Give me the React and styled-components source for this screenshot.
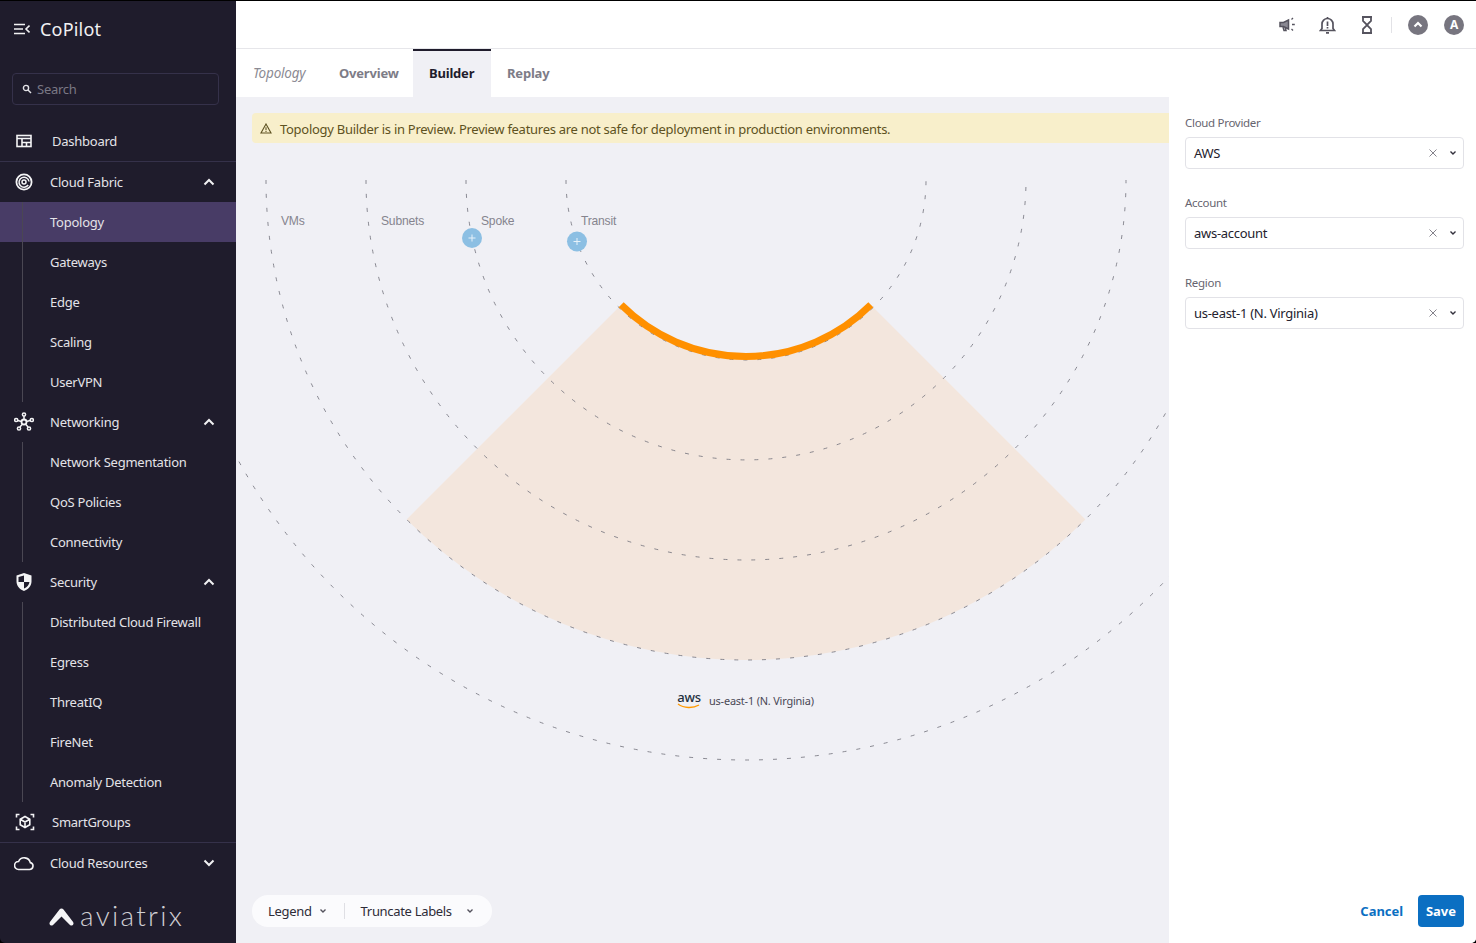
import React from 'react';
import styled, { createGlobalStyle } from 'styled-components';

const FONT = '"Noto Sans", "Open Sans", sans-serif';

const GlobalStyle = createGlobalStyle`
  html, body {
    margin: 0;
    padding: 0;
    height: 100%;
    background: #000;
    overflow: hidden;
  }
  * {
    box-sizing: border-box;
  }
  #root {
    height: 100%;
  }
`;

const Frame = styled.div`
  display: flex;
  width: 1476px;
  height: 942px;
  margin-top: 1px;
  overflow: hidden;
  border-radius: 0 0 5px 5px;
  font-family: ${FONT};
  font-size: 13px;
  letter-spacing: -0.2px;
`;

/* sidebar */
const Sidebar = styled.aside`
  display: flex;
  flex-direction: column;
  flex: 0 0 236px;
  background: #1f1c2c;
  color: #e4e3e8;
  letter-spacing: -0.25px;
`;

const Brand = styled.div`
  display: flex;
  align-items: center;
  gap: 10px;
  height: 56px;
  padding: 0 0 0 14px;
  font-size: 18px;
  letter-spacing: 0.2px;
  color: #f1f1f3;
`;

const SearchBox = styled.div`
  display: flex;
  align-items: center;
  gap: 4px;
  height: 32px;
  margin: 16px 17px 16px 12px;
  padding: 0 9px;
  border: 1px solid #35314a;
  border-radius: 4px;
  color: #7a7885;
  svg {
    color: #e4e3e8;
  }
`;

const NavRow = styled.div`
  display: flex;
  align-items: center;
  height: 40px;
  padding-left: ${(p) => (p.$wide ? '52px' : '50px')};
  padding-right: 21px;
  position: relative;
  ${(p) => p.$divider && 'border-bottom: 1px solid #35314a; height: 41px;'}
`;

const NavIcon = styled.span`
  position: absolute;
  left: ${(p) => p.$left || 14}px;
  top: 50%;
  transform: translateY(-50%);
  display: flex;
  color: #f4f4f6;
`;

const Caret = styled.svg`
  margin-left: auto;
  width: 12px;
  height: 8px;
  color: #f1f1f3;
`;

const SubList = styled.div`
  position: relative;
  &::before {
    content: '';
    position: absolute;
    left: 22px;
    top: 0;
    bottom: 0;
    width: 1px;
    background: #4a4753;
    z-index: 1;
  }
`;

const SubItem = styled.div`
  display: flex;
  align-items: center;
  height: 40px;
  padding-left: 50px;
  background: ${(p) => (p.$active ? '#483c66' : 'transparent')};
`;

const LogoRow = styled.div`
  display: flex;
  align-items: center;
  gap: 5px;
  margin-top: 14px;
  padding-left: 48px;
  height: 40px;
`;

const LogoWord = styled.span`
  font-family: "Lato", sans-serif;
  font-weight: 300;
  font-size: 28px;
  letter-spacing: 2.3px;
  color: #cfced3;
  line-height: 1;
  margin-top: -4px;
`;

/* right side */
const Content = styled.div`
  display: flex;
  flex-direction: column;
  flex: 1;
  min-width: 0;
  background: #fff;
`;

const TopBar = styled.header`
  display: flex;
  align-items: center;
  justify-content: flex-end;
  flex: 0 0 48px;
  padding-right: 12px;
  border-bottom: 1px solid #e6e6ea;
  color: #55535e;
`;

const TopIcon = styled.span`
  display: flex;
  justify-content: center;
  width: 40px;
`;

const TopDivider = styled.span`
  width: 1px;
  height: 16px;
  margin: 0 16px 0 4px;
  background: #e2e2e6;
`;

const Avatar = styled.span`
  display: flex;
  align-items: center;
  justify-content: center;
  width: 20px;
  height: 20px;
  margin-left: ${(p) => p.$gap || 0}px;
  border-radius: 50%;
  background: #77757f;
  color: #fff;
  font-size: 12px;
  font-weight: 700;
`;

const Tabs = styled.nav`
  display: flex;
  flex: 0 0 48px;
  padding-left: 1px;
`;

const Tab = styled.div`
  display: flex;
  align-items: center;
  flex: 0 0 ${(p) => (p.$width ? `${p.$width}px` : 'auto')};
  min-width: 0;
  padding: 0 0 2px 16px;
  white-space: nowrap;
  font-size: 13px;
  font-weight: ${(p) => (p.$plain ? 400 : 700)};
  font-style: ${(p) => (p.$plain ? 'italic' : 'normal')};
  color: ${(p) => (p.$active ? '#1f1c2c' : '#7d7c87')};
  background: ${(p) => (p.$active ? '#f0f0f5' : 'transparent')};
  border-top: 2px solid ${(p) => (p.$active ? '#1f1c2c' : 'transparent')};
  ${(p) => p.$plain && 'color: #8b8a93; font-size: 13.5px;'}
`;

const Body = styled.div`
  display: flex;
  flex: 1;
  min-height: 0;
`;

const Stage = styled.main`
  position: relative;
  display: flex;
  flex-direction: column;
  flex: 0 0 933px;
  padding: 16px 0 16px 16px;
  background: #f0f0f5;
  overflow: hidden;
`;

const Canvas = styled.svg`
  position: absolute;
  left: 0;
  top: 0;
`;

const Banner = styled.div`
  position: relative;
  display: flex;
  align-items: center;
  gap: 8px;
  height: 30px;
  padding: 1px 0 0 8px;
  border-radius: 4px 0 0 4px;
  background: #f8efcb;
  color: #5e5222;
  letter-spacing: -0.28px;
`;

const RegionTag = styled.div`
  position: absolute;
  left: 441px;
  top: 595px;
  display: flex;
  align-items: center;
  gap: 8px;
  font-size: 10.95px;
  color: #4a4855;
`;

const AwsMark = styled.span`
  display: flex;
  flex-direction: column;
  align-items: center;
  width: 24px;
  font-size: 13px;
  font-weight: 500;
  line-height: 11px;
  letter-spacing: -0.3px;
  color: #232f3e;
`;

const ToolPill = styled.div`
  position: relative;
  display: flex;
  align-items: center;
  align-self: flex-start;
  height: 32px;
  margin-top: auto;
  padding: 0 18px 0 16px;
  border-radius: 16px;
  background: #fbfbfd;
  color: #2e2c38;
  letter-spacing: -0.32px;
`;

const ToolDivider = styled.span`
  width: 1px;
  height: 16px;
  margin: 0 16px 0 17px;
  background: #dfdfe4;
`;

const SmallChevron = styled.svg`
  width: 8px;
  height: 6px;
  margin-left: ${(p) => p.$gap || 0}px;
  color: ${(p) => p.$color || '#55535e'};
`;

const Panel = styled.section`
  display: flex;
  flex-direction: column;
  flex: 1;
  padding: 16px 12px 16px 16px;
  background: #fff;
`;

const Field = styled.div`
  display: flex;
  flex-direction: column;
  height: 80px;
`;

const FieldLabel = styled.label`
  height: 24px;
  padding-top: 1px;
  font-size: 11.5px;
  line-height: 17px;
  letter-spacing: -0.3px;
  color: #66646f;
`;

const Select = styled.div`
  display: flex;
  align-items: center;
  height: 32px;
  padding: 0 6px 0 8px;
  border: 1px solid #e2e2e7;
  border-radius: 4px;
  color: #24222e;
  letter-spacing: -0.28px;
`;

const ClearMark = styled.svg`
  width: 8px;
  height: 8px;
  margin-left: auto;
  margin-right: 12px;
  color: #77757f;
`;

const PanelActions = styled.div`
  display: flex;
  align-items: center;
  justify-content: flex-end;
  gap: 15px;
  margin-top: auto;
`;

const CancelLink = styled.span`
  font-weight: 700;
  letter-spacing: -0.05px;
  color: #0b6fc2;
`;

const SaveButton = styled.button`
  width: 46px;
  height: 32px;
  padding: 0;
  border: none;
  border-radius: 4px;
  background: #0b6fc2;
  color: #fff;
  font: inherit;
  font-weight: 700;
`;

const Up = () => (
  <Caret viewBox="0 0 12 8" fill="none" stroke="currentColor" strokeWidth="2">
    <path d="M1.5 6.5 6 2l4.5 4.5" />
  </Caret>
);

const Down = () => (
  <Caret viewBox="0 0 12 8" fill="none" stroke="currentColor" strokeWidth="2">
    <path d="M1.5 1.5 6 6l4.5-4.5" />
  </Caret>
);

const Chev = ({ gap, color }) => (
  <SmallChevron $gap={gap} $color={color} viewBox="0 0 8 6" fill="none" stroke="currentColor" strokeWidth="1.4">
    <path d="M1.5 1.5 4 4l2.5-2.5" />
  </SmallChevron>
);

const Icon = ({ size = 20, children, ...rest }) => (
  <svg width={size} height={size} viewBox="0 0 20 20" fill="none" stroke="currentColor" strokeWidth="1.6" {...rest}>
    {children}
  </svg>
);

const sections = [
  {
    label: 'Cloud Fabric',
    icon: (
      <Icon strokeWidth="1.8" size={20}>
        <circle cx="10" cy="10" r="7.6" />
        <path d="M14.200 13A5 5 0 1 1 15 9.500" strokeWidth="1.5" />
        <circle cx="10" cy="10" r="2" strokeWidth="1.500" />
      </Icon>
    ),
    items: ['Topology', 'Gateways', 'Edge', 'Scaling', 'UserVPN'],
  },
  {
    label: 'Networking',
    icon: (
      <Icon>
        <circle cx="10" cy="10" r="2.500" strokeWidth="1.800" />
        <g strokeWidth="1.500">
          <circle cx="10" cy="2.500" r="1.600" />
          <circle cx="2.200" cy="8" r="1.600" />
          <circle cx="17.800" cy="8" r="1.600" />
          <circle cx="5" cy="16.500" r="1.600" />
          <circle cx="15" cy="16.500" r="1.600" />
          <path d="M10 4v3.500M3.800 8.400l3.800 1M16.200 8.400l-3.800 1M5.900 15l2.700-3M14.100 15l-2.700-3" />
        </g>
      </Icon>
    ),
    items: ['Network Segmentation', 'QoS Policies', 'Connectivity'],
  },
  {
    label: 'Security',
    icon: (
      <Icon stroke="none">
        <path
          fill="currentColor"
          fillRule="evenodd"
          d="M10 1 2.500 3.500v6c0 4.300 3.200 7.800 7.500 9.500 4.300-1.700 7.500-5.200 7.500-9.500v-6L10 1ZM10 3.500V10H4.500V5L10 3.500Zm0 6.500h5.500c-.3 3-2.700 5.300-5.500 6.600V10Z"
        />
      </Icon>
    ),
    items: ['Distributed Cloud Firewall', 'Egress', 'ThreatIQ', 'FireNet', 'Anomaly Detection'],
  },
];

const radii = [180, 280, 380, 480, 580];
const CX = 746;
const CY = 180;

const arcPath = (r) => `M${CX - r} ${CY}A${r} ${r} 0 0 0 ${CX + r} ${CY}`;

const polar = (r, deg) => {
  const a = (deg * Math.PI) / 180;
  return [CX + r * Math.cos(a), CY + r * Math.sin(a)];
};

const wedge = () => {
  const [ax, ay] = polar(480, 135);
  const [bx, by] = polar(480, 45);
  const [cx, cy] = polar(176, 45);
  const [dx, dy] = polar(176, 135);
  return `M${ax} ${ay}A480 480 0 0 0 ${bx} ${by}L${cx} ${cy}A176 176 0 0 1 ${dx} ${dy}Z`;
};

const orangeArc = () => {
  const [cx, cy] = polar(176.5, 45);
  const [dx, dy] = polar(176.5, 135);
  return `M${dx} ${dy}A176.5 176.5 0 0 0 ${cx} ${cy}`;
};

const PlusNode = ({ x, y }) => (
  <g>
    <circle cx={x} cy={y} r="10" fill="#8cbfe3" />
    <path d={`M${x - 3.5} ${y}h7M${x} ${y - 3.5}v7`} stroke="#e6f1f9" strokeWidth="1" />
  </g>
);

const TopologyCanvas = () => (
  <Canvas width="933" height="846" viewBox="236 97 933 846" fontFamily="Liberation Sans, Arial, sans-serif">
    <path d={wedge()} fill="#f3e6dd" />
    {radii.map((r) => (
      <path key={r} d={arcPath(r)} fill="none" stroke="#6f6e78" strokeWidth="0.8" strokeDasharray="4 10" />
    ))}
    <path d={orangeArc()} fill="none" stroke="#ff9000" strokeWidth="7" />
    <g fontSize="12.1" fill="#85848e">
      <text x="281" y="225">VMs</text>
      <text x="381" y="225">Subnets</text>
      <text x="481" y="225">Spoke</text>
      <text x="581" y="225">Transit</text>
    </g>
    <PlusNode x={472} y={238} />
    <PlusNode x={577} y={241.5} />
  </Canvas>
);

const fields = [
  ['Cloud Provider', 'AWS'],
  ['Account', 'aws-account'],
  ['Region', 'us-east-1 (N. Virginia)'],
];

export default function App() {
  return (
    <Frame>
      <GlobalStyle />
      <Sidebar>
        <Brand>
          <svg width="16" height="12" viewBox="0 0 16 12" fill="none" stroke="currentColor" strokeWidth="1.6">
            <path d="M0 1.500h11M0 6h9M0 10.500h11M15.500 2.500 12 6l3.500 3.500" />
          </svg>
          CoPilot
        </Brand>
        <SearchBox>
          <svg width="11" height="11" viewBox="0 0 11 11" fill="none" stroke="currentColor" strokeWidth="1.4">
            <circle cx="4" cy="4" r="2.600" />
            <path d="m6 6 3 3" />
          </svg>
          Search
        </SearchBox>
        <NavRow $wide $divider>
          <NavIcon $left={16}>
            <Icon size={16} viewBox="0 0 16 16" strokeWidth="1.600">
              <rect x="1" y="2.500" width="14" height="11" />
              <path d="M1 5.500h14M6 5.500v8M6 9.500h9M10.500 9.500v4" />
            </Icon>
          </NavIcon>
          Dashboard
        </NavRow>
        {sections.map((s) => (
          <React.Fragment key={s.label}>
            <NavRow>
              <NavIcon>{s.icon}</NavIcon>
              {s.label}
              <Up />
            </NavRow>
            <SubList>
              {s.items.map((item) => (
                <SubItem key={item} $active={item === 'Topology'}>
                  {item}
                </SubItem>
              ))}
            </SubList>
          </React.Fragment>
        ))}
        <NavRow $wide $divider>
          <NavIcon $left={15}>
            <Icon>
              <path d="M1.500 5.500V2.500H4.500M15.500 2.500h3v3M1.500 14.500v3h3M15.500 17.500h3v-3" strokeWidth="1.600" />
              <path d="M10 4.500l4.800 2.700v5.600L10 15.500l-4.800-2.700V7.200L10 4.500ZM5.200 7.200 10 10l4.800-2.800M10 10v5.500" strokeWidth="1.600" />
            </Icon>
          </NavIcon>
          SmartGroups
        </NavRow>
        <NavRow>
          <NavIcon>
            <Icon>
              <path d="M4.500 16.500h11a3.500 3.500 0 0 0 .8-6.900A6.200 6.200 0 0 0 4.600 8.500a4 4 0 0 0-.1 8Z" strokeWidth="1.600" />
            </Icon>
          </NavIcon>
          Cloud Resources
          <Down />
        </NavRow>
        <LogoRow>
          <svg width="27" height="20" viewBox="0 0 26 20">
            <path
              fill="#f4f4f6"
              d="M13 1.500c.8 0 1.500.4 2 1.100l9.600 12.500c1.200 1.600-.1 3.900-2.100 3.400-.5-.1-1-.4-1.300-.8L13 9.500 4.800 17.700c-.3.400-.8.700-1.300.8-2 .5-3.300-1.800-2.100-3.400L11 2.600c.5-.7 1.200-1.100 2-1.100Z"
            />
          </svg>
          <LogoWord>aviatrix</LogoWord>
        </LogoRow>
      </Sidebar>

      <Content>
        <TopBar>
          <TopIcon>
            <svg width="20" height="16" viewBox="-1 0 20 16" fill="none" stroke="currentColor" strokeWidth="1.500">
              <path d="M2 5.500h3.500l5-2.500v9l-5-2.500H2v-4Z" fill="#8a8993" />
              <path d="M5 10l1 3.500h2l-.8-3" />
              <path d="M13.500 2.500l1.500-1.500M14 7.500h2.800M13.500 12l1.500 1.500" strokeWidth="1.300" />
            </svg>
          </TopIcon>
          <TopIcon>
            <svg width="17" height="18" viewBox="0 0 17 18" fill="none" stroke="currentColor" strokeWidth="1.700">
              <path d="M1.500 14.500h14l-1.500-2V8a5.500 5.500 0 0 0-11 0v4.500l-1.500 2Z" />
              <path d="M8.500 5.500v4.500M8.500 11v1.500M7 16.800h3M8.500 2.500V1" />
            </svg>
          </TopIcon>
          <TopIcon>
            <svg width="12" height="18" viewBox="0 0 12 18" fill="none" stroke="currentColor" strokeWidth="1.800">
              <path d="M1 1h10M1 17h10M2 1v4l4 4 4-4V1M2 17v-4l4-4 4 4v4" />
            </svg>
          </TopIcon>
          <TopDivider />
          <Avatar>
            <svg width="10" height="7" viewBox="0 0 10 7" fill="none" stroke="currentColor" strokeWidth="2.200">
              <path d="M1.500 5.500 5 2l3.500 3.500" />
            </svg>
          </Avatar>
          <Avatar $gap={16}>A</Avatar>
        </TopBar>
        <Tabs>
          <Tab $plain $width={86}>Topology</Tab>
          <Tab $width={90}>Overview</Tab>
          <Tab $active $width={78}>Builder</Tab>
          <Tab>Replay</Tab>
        </Tabs>
        <Body>
          <Stage>
            <TopologyCanvas />
            <Banner>
              <svg width="12" height="11" viewBox="0 0 12 11" fill="none" stroke="currentColor" strokeWidth="1.100">
                <path d="M6 1 11 10H1L6 1Z" />
                <path d="M6 4.200v3M6 8v1" />
              </svg>
              Topology Builder is in Preview. Preview features are not safe for deployment in production environments.
            </Banner>
            <RegionTag>
              <AwsMark>
                aws
                <svg width="24" height="6" viewBox="0 0 24 6" fill="none" stroke="#ff9900" strokeWidth="1.300">
                  <path d="M1 1c6 4.500 15 4.500 21 1" />
                </svg>
              </AwsMark>
              us-east-1 (N. Virginia)
            </RegionTag>
            <ToolPill>
              Legend
              <Chev gap={7} />
              <ToolDivider />
              Truncate Labels
              <Chev gap={14} />
            </ToolPill>
          </Stage>
          <Panel>
            {fields.map(([label, value]) => (
              <Field key={label}>
                <FieldLabel>{label}</FieldLabel>
                <Select>
                  {value}
                  <ClearMark viewBox="0 0 8 8" fill="none" stroke="currentColor" strokeWidth="0.900">
                    <path d="m.5.5 7 7M7.500.5l-7 7" />
                  </ClearMark>
                  <Chev color="#33313d" />
                </Select>
              </Field>
            ))}
            <PanelActions>
              <CancelLink>Cancel</CancelLink>
              <SaveButton>Save</SaveButton>
            </PanelActions>
          </Panel>
        </Body>
      </Content>
    </Frame>
  );
}
